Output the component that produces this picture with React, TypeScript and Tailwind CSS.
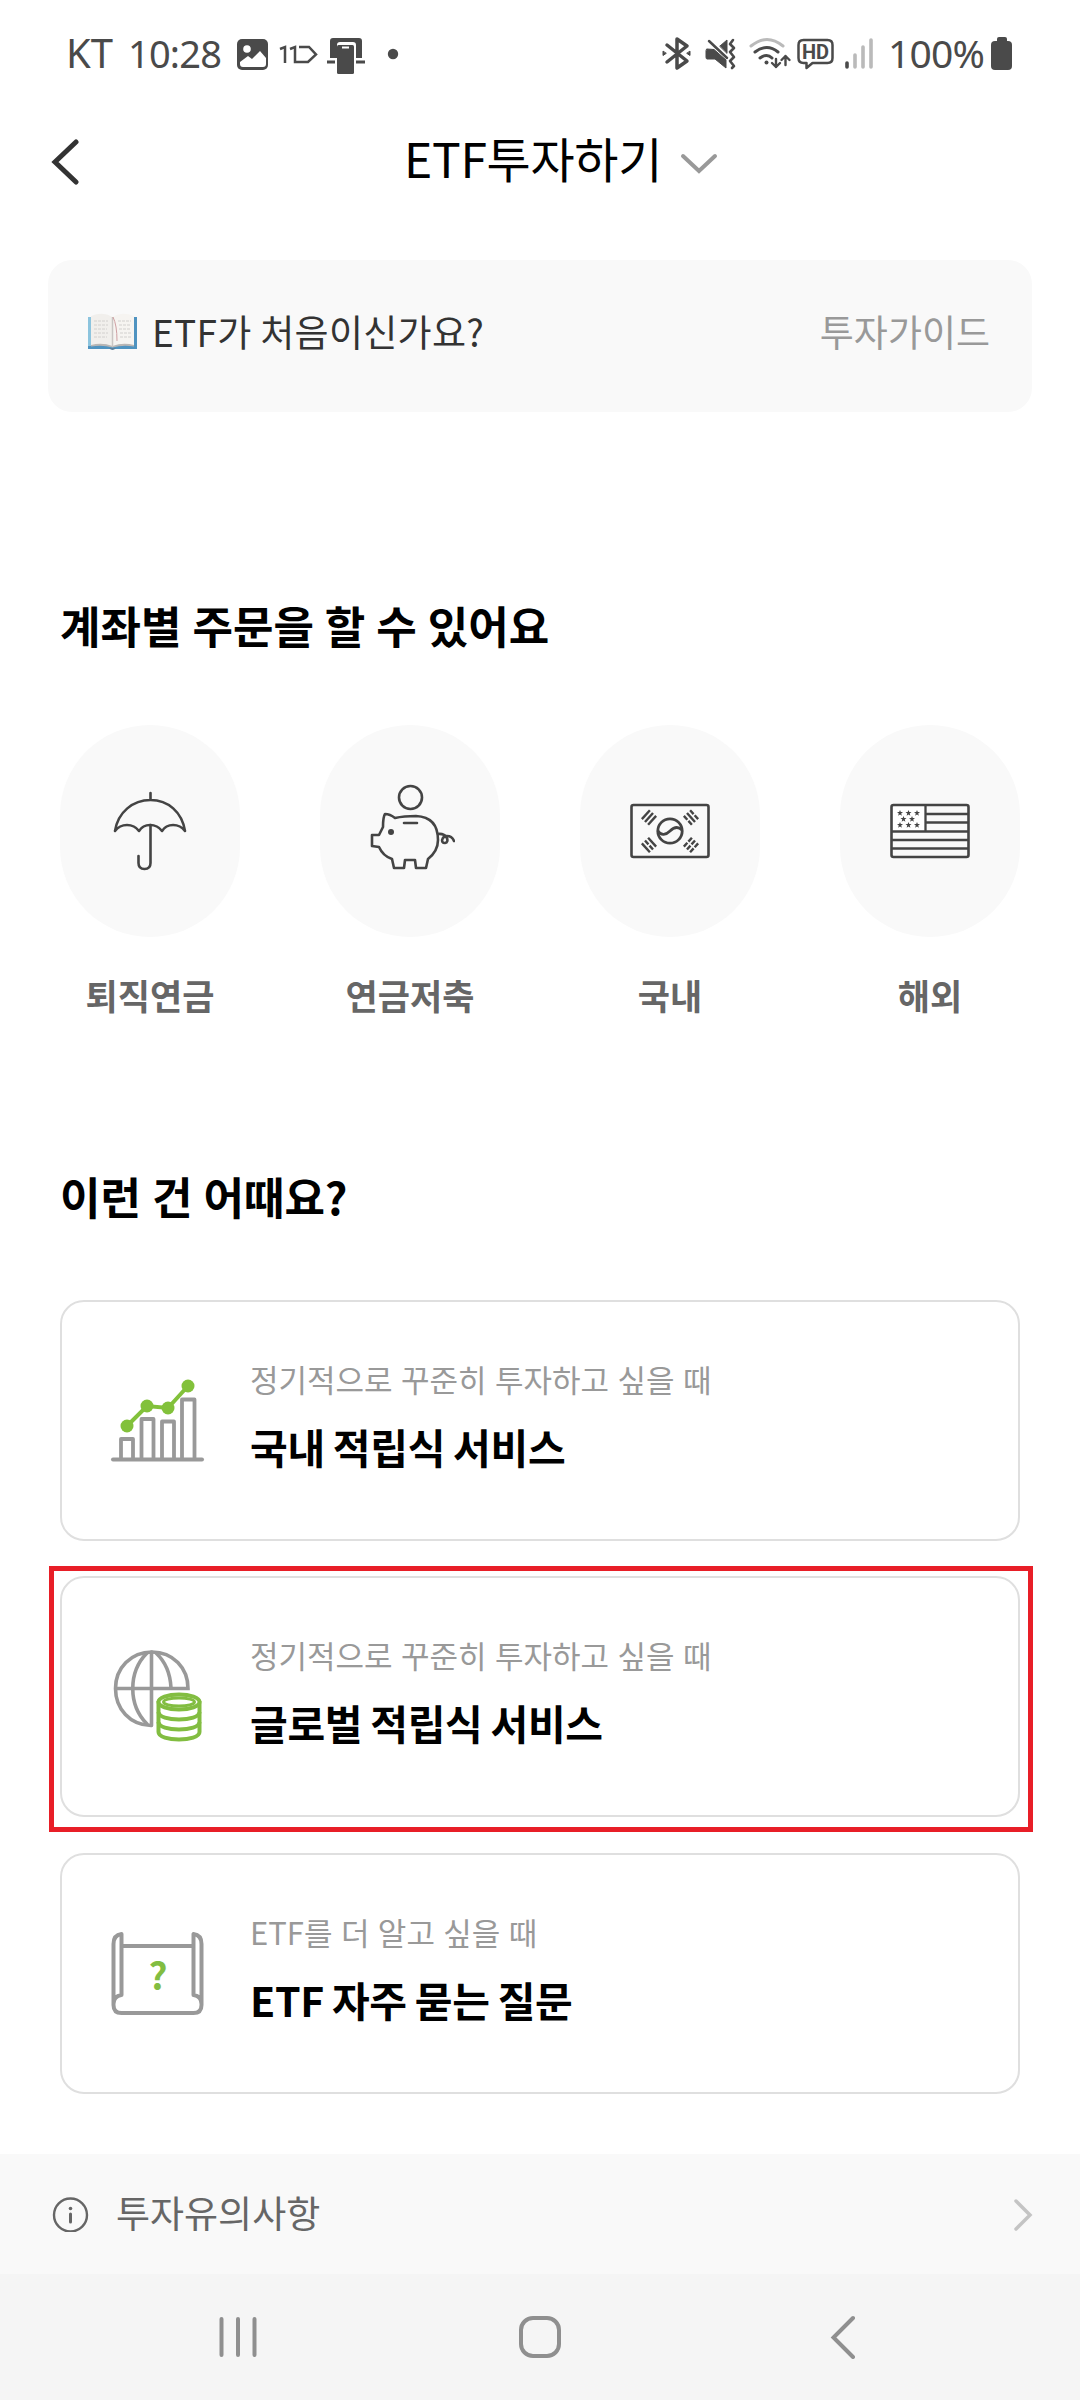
import type { ReactNode } from 'react'

const quickMenus = [
  { label: '퇴직연금', icon: <UmbrellaIcon /> },
  { label: '연금저축', icon: <PiggyIcon /> },
  { label: '국내', icon: <KoreaFlagIcon /> },
  { label: '해외', icon: <UsaFlagIcon /> },
]

export default function App() {
  return (
    <div className="flex h-[2400px] w-[1080px] flex-col bg-white font-['Noto_Sans_CJK_KR',sans-serif] whitespace-nowrap text-black">
      <StatusBar />

      <header className="flex h-[104px] items-center pl-[51px]">
        <svg className="mt-1 h-[46px] w-7" viewBox="0 0 28 46" fill="none">
          <path
            d="M25 3 4 23l21 20"
            stroke="#333"
            strokeWidth="5"
            strokeLinecap="round"
          />
        </svg>
        <div className="ml-[325px] flex items-center">
          <h1 className="w-[257px] pb-1.5 text-[48px] leading-[56px] tracking-[-0.3px]">
            ETF투자하기
          </h1>
          <svg className="mt-2 ml-[19px] h-6 w-10" viewBox="0 0 40 24" fill="none">
            <path
              d="m3 4 16 15L35 4"
              stroke="#999"
              strokeWidth="4"
              strokeLinecap="round"
            />
          </svg>
        </div>
      </header>

      <section className="mx-12 mt-12 flex h-[152px] items-center rounded-3xl bg-[#f9f9f9] pr-[42px] pb-2 pl-[39px]">
        <BookIcon />
        <span className="ml-3.5 text-[37px] tracking-[0.3px] text-[#333]">
          ETF가 처음이신가요?
        </span>
        <span className="ml-auto text-[37px] text-[#999]">투자가이드</span>
      </section>

      <section className="mt-[181px] px-[60px]">
        <h2 className="h-[64px] text-[44px] leading-[64px] font-bold [word-spacing:1px]">
          계좌별 주문을 할 수 있어요
        </h2>
        <div className="mt-[68px] flex justify-between">
          {quickMenus.map((menu) => (
            <div key={menu.label} className="flex w-[180px] flex-col items-center">
              <div className="flex h-[212px] w-[180px] items-center justify-center rounded-[90px] bg-[#f9f9f9]">
                {menu.icon}
              </div>
              <span className="mt-8 text-[35px] leading-[52px] font-bold text-[#666]">
                {menu.label}
              </span>
            </div>
          ))}
        </div>
      </section>

      <section className="mt-[143px] px-[60px]">
        <h2 className="h-[64px] text-[44px] leading-[64px] font-bold [word-spacing:1px]">
          이런 건 어때요?
        </h2>
        <div className="mt-[72px] flex flex-col gap-[35px]">
          <ServiceCard
            icon={<ChartIcon />}
            caption="정기적으로 꾸준히 투자하고 싶을 때"
            title="국내 적립식 서비스"
          />
          <div className="relative mb-px">
            <ServiceCard
              icon={<GlobeIcon />}
              caption="정기적으로 꾸준히 투자하고 싶을 때"
              title="글로벌 적립식 서비스"
            />
            <div className="absolute -top-[10px] -right-[13px] -bottom-[15px] -left-[11px] border-[5px] border-[#e81e27]" />
          </div>
          <ServiceCard
            icon={<ScrollIcon />}
            caption="ETF를 더 알고 싶을 때"
            title="ETF 자주 묻는 질문"
          />
        </div>
      </section>

      <div className="mt-auto flex h-[120px] shrink-0 items-center bg-[#f9f9f9] pl-[52px]">
        <svg className="h-9 w-[37px]" viewBox="0 0 37 36" fill="none" stroke="#666">
          <circle cx="18.5" cy="19" r="16.5" strokeWidth="2.4" />
          <path d="M18.5 18v8" strokeWidth="3" strokeLinecap="round" />
          <circle cx="18.5" cy="12.5" r="1.8" fill="#666" stroke="none" />
        </svg>
        <span className="ml-[27px] pb-1 text-[37px] leading-[56px] text-[#666]">
          투자유의사항
        </span>
        <svg className="mr-[47px] ml-auto h-9 w-5" viewBox="0 0 20 36" fill="none">
          <path
            d="m3 5 14 14L3 33"
            stroke="#c4c4c4"
            strokeWidth="3.5"
            strokeLinecap="round"
          />
        </svg>
      </div>

      <nav className="flex h-[126px] shrink-0 items-center bg-[#f5f5f5] pl-[218px]">
        <svg className="h-11 w-10" viewBox="0 0 40 44" stroke="#8f8f8f">
          <path d="M3.5 4v36M20 4v36M36.500 4v36" strokeWidth="4" strokeLinecap="round" />
        </svg>
        <div className="ml-[261px] h-[42px] w-[42px] rounded-[14px] border-4 border-[#8f8f8f]" />
        <svg className="ml-[269px] h-11 w-7" viewBox="0 0 28 44" fill="none">
          <path
            d="M23 3 3.500 22.500 23 42"
            stroke="#8f8f8f"
            strokeWidth="4"
            strokeLinecap="round"
          />
        </svg>
      </nav>
    </div>
  )
}

interface ServiceCardProps {
  icon: ReactNode
  caption: string
  title: string
}

function ServiceCard({ icon, caption, title }: ServiceCardProps) {
  return (
    <div className="flex h-[241px] items-center rounded-[24px] border-2 border-[#dfdfdf] bg-white pl-12">
      <div className="pb-[3px]">{icon}</div>
      <div className="ml-11 flex flex-col pb-[9px]">
        <span className="text-[31px] leading-[46px] text-[#999] [word-spacing:1.5px]">
          {caption}
        </span>
        <span className="mt-[14px] text-[41px] leading-[60px] font-bold tracking-[-0.3px] [word-spacing:-1px]">
          {title}
        </span>
      </div>
    </div>
  )
}

function StatusBar() {
  return (
    <div className="flex h-[108px] shrink-0 items-center pl-[66px] font-['Noto_Sans',sans-serif] text-[#4a4a4a]">
      <span className="w-[62px] pb-0.5 text-[40px] leading-[54px]">KT</span>
      <span className="w-[99px] pb-0.5 text-[38px] leading-[54px] tracking-[-0.8px]">
        10:28
      </span>
      {/* 알림 아이콘 */}
      <svg className="ml-[9px] h-10 w-[164px]" viewBox="0 0 164 40">
        <rect x="1" y="5" width="31" height="31" rx="5" fill="#4a4a4a" />
        <circle cx="11" cy="15" r="3.800" fill="#fff" />
        <path
          d="M4 28l8-6 4 3 8-8 6 7v6q0 3-3 3H7q-3 0-3-3z"
          fill="#fff"
        />
        <g fill="none" stroke="#4a4a4a" strokeWidth="2.500">
          <path d="m44 15 5-2v16M54 15l5-2v15h13l8-7.500-7-7.500H63" />
        </g>
        <path
          d="M94 24V7q0-3 3-3h26q3 0 3 3v17h-6V11q0-3-3-3h-13q-3 0-3 3v13z"
          fill="#4a4a4a"
        />
        <path d="M91 28h8M120 28h9" stroke="#4a4a4a" strokeWidth="3" />
        <rect x="101" y="11" width="17" height="29" rx="1.500" fill="#4a4a4a" />
        <path d="M106 13.500h7" stroke="#fff" strokeWidth="2" />
        <circle cx="157" cy="20" r="5.200" fill="#4a4a4a" />
      </svg>
      {/* 블루투스 / 무음 / 와이파이 / HD / 신호 */}
      <svg
        className="ml-[260px] h-10 w-[216px]"
        viewBox="0 0 216 40"
        fill="none"
        stroke="#4a4a4a"
        strokeLinecap="round"
        strokeLinejoin="round"
      >
        <path d="m7 11 20 16-10 7V5l10 7L7 28" strokeWidth="3.500" />
        <path d="M3 17.500v4l3-2zM30 17.500v4l-3-2z" fill="#4a4a4a" strokeWidth="1" />
        <path
          d="m47 15 7 .5L66 26v8L55 25h-8q-1 0-1-2v-6zM60 12l7-6v13z"
          fill="#4a4a4a"
          strokeWidth="1"
        />
        <path d="m49 7 18 17" strokeWidth="2.500" />
        <path d="m73 6-3 4 4 4-4 4 4 5-4 4 4 5-2 2" strokeWidth="2.600" />
        <path d="M91 12q16-13 32 0" stroke="#bababa" strokeWidth="3" />
        <path d="M95 18q12-9 23 0M100 24q7-5 12 0" strokeWidth="3" />
        <circle cx="106.500" cy="28.500" r="2" fill="#4a4a4a" stroke="none" />
        <path d="M116 25v8m-4-4 4 4 4-4M125.500 31v-9m-4 4 4-4 4 4" strokeWidth="2.400" />
        <path
          d="M143.500 6h24q5 0 5 5v13q0 5-5 5h-15l-6 5v-5h-3q-5 0-5-5V11q0-5 5-5z"
          strokeWidth="2.500"
        />
        <text
          x="155.500"
          y="25"
          textAnchor="middle"
          fill="#4a4a4a"
          stroke="none"
          fontSize="20"
          fontWeight="700"
          fontFamily="Roboto"
        >
          HD
        </text>
        <path d="M187 29v4" strokeWidth="3.600" />
        <path d="M195 21v12M203 13v20M211 6v27" stroke="#bababa" strokeWidth="3.600" />
      </svg>
      <span className="ml-3 w-[103px] pb-0.5 text-[39px] leading-[54px] tracking-[-0.8px]">
        100%
      </span>
      <svg className="h-[34px] w-[22px]" viewBox="0 0 22 34" fill="#4a4a4a">
        <rect x="6" y="0" width="10" height="6" rx="2" />
        <rect x="0" y="4" width="21" height="29" rx="4" />
      </svg>
    </div>
  )
}

function BookIcon() {
  return (
    <svg className="h-[38px] w-[51px]" viewBox="0 0 51 38">
      <path d="M1 4h49v32H1z" fill="#4f93c0" />
      <path d="M1 4h3v29H1z" fill="#8cc4de" />
      <path d="M4 3q12-5 21.500 1v30Q15 29 4 33z" fill="#f1efec" />
      <path d="M47 3q-12-5-21.500 1v30Q36 29 47 33z" fill="#f6f4f1" />
      <path d="M4 32q11-3 21.500 1Q36 29 47 32v1.500q-11-2-21.500 1-10-3-21.500-1z" fill="#b9b6b4" />
      <path d="M22 35q3.500 4 7 0z" fill="#5a7f9c" />
      <path d="M25.500 4v30" stroke="#c9c5c3" strokeWidth="1.500" />
      <path d="M26 4q4 8 4 24" stroke="#cf9fa2" fill="none" />
      <path
        d="M7 8h14M7 12h14M7 16h13M7 20h14M7 24h13M31 8h13M32 12h12M32 16h12M33 20h11M33 24h11"
        stroke="#d2d0ce"
        strokeWidth="1"
        strokeDasharray="3 1"
      />
    </svg>
  )
}

function UmbrellaIcon() {
  return (
    <svg
      className="h-[106px] w-[90px]"
      viewBox="0 0 90 106"
      fill="none"
      stroke="#444"
      strokeWidth="2.600"
      strokeLinecap="round"
      strokeLinejoin="round"
    >
      <path d="M45.500 15v7M10 53C13 34 28 22 45.500 22S77 34 80 53c-6-8-18-8-23 0-6-8-18-8-23 0-6-8-18-8-24 0z" />
      <path d="M45.500 47v38q0 6-6 6t-6-6v-7" />
    </svg>
  )
}

function PiggyIcon() {
  return (
    <svg
      className="h-[106px] w-[90px]"
      viewBox="0 0 90 106"
      fill="none"
      stroke="#444"
      strokeWidth="2.600"
      strokeLinecap="round"
      strokeLinejoin="round"
    >
      <circle cx="45.500" cy="19.500" r="11.500" />
      <path d="M20 36q5 0 10 4 9-2 21-2 22 1 22 24 0 11-10 19l-2 9H51l-1-8H40l-1 8H29l-2-9q-9-3-13-12l-7-1V57h7l4-8q0-10 2-13z" />
      <path d="M39 45h13M73 56c9-1 12 8 7 9-5 0-3-7 2-7q5 0 7 5" />
      <circle cx="26" cy="54" r="3" fill="#444" stroke="none" />
    </svg>
  )
}

function Trigram({ x, y, angle, rows }: { x: number; y: number; angle: number; rows: number[] }) {
  // 1: 이어진 막대, 0: 끊어진 막대
  return (
    <g transform={`translate(${x} ${y}) rotate(${angle})`} strokeWidth="2.400">
      {rows.map((solid, i) => (
        <path
          key={i}
          d="M-6 0H6"
          transform={`translate(0 ${(i - 1) * 4.2})`}
          strokeDasharray={solid ? undefined : '5.200 1.600'}
        />
      ))}
    </g>
  )
}

function KoreaFlagIcon() {
  return (
    <svg className="h-[106px] w-[90px]" viewBox="0 0 90 106" fill="none" stroke="#444">
      <rect x="6.500" y="27" width="77" height="52" rx="2" strokeWidth="2.600" />
      <circle cx="45" cy="53" r="12.200" strokeWidth="2.800" />
      <path d="M33 53c3 5 8 4 12 0s8-5 12-1" strokeWidth="2.800" />
      <Trigram x={24} y={39.500} angle={-48} rows={[1, 1, 1]} />
      <Trigram x={66} y={39.500} angle={48} rows={[0, 1, 0]} />
      <Trigram x={24} y={67} angle={48} rows={[1, 0, 1]} />
      <Trigram x={66} y={67} angle={-48} rows={[0, 0, 0]} />
    </svg>
  )
}

const stars = [
  [15, 35], [23.500, 35], [32, 35],
  [18.500, 41], [27, 41],
  [15, 47], [23.500, 47], [32, 47],
]

function UsaFlagIcon() {
  return (
    <svg className="h-[106px] w-[90px]" viewBox="0 0 90 106" fill="none" stroke="#444">
      <path d="M8 28h33v26H8z" fill="#fff" stroke="none" />
      <rect x="6.500" y="27" width="77" height="52" rx="2" strokeWidth="2.600" />
      <path d="M41 36h42M41 44.500h42M7 53.500h76M7 62h76M7 70.500h76M40.500 27v26" strokeWidth="2.300" />
      {stars.map(([x, y]) => (
        <path
          key={`${x}-${y}`}
          d="M0-3 .8-.9 3-.9 1.200.5 1.900 2.700 0 1.400-1.900 2.700-1.200.5-3-.9-.8-.9z"
          transform={`translate(${x} ${y})`}
          fill="#444"
          stroke="none"
        />
      ))}
    </svg>
  )
}

function ChartIcon() {
  return (
    <svg className="h-[100px] w-24" viewBox="0 0 96 100" fill="none">
      <path
        d="M11 90V70h12v20M31.500 90V50h12v40M52 90V52.500h12V90M72 90V30.500h12.500V90"
        stroke="#999"
        strokeWidth="3.800"
        strokeLinejoin="round"
      />
      <path d="M3 90.500h89" stroke="#999" strokeWidth="4" strokeLinecap="round" />
      <path d="m17 57 20-20 21 2 20-22" stroke="#82c13b" strokeWidth="4" />
      <g fill="#82c13b">
        <circle cx="17" cy="57" r="6.500" />
        <circle cx="37" cy="37" r="6.500" />
        <circle cx="58" cy="39" r="6.500" />
        <circle cx="78" cy="17" r="6.500" />
      </g>
    </svg>
  )
}

function GlobeIcon() {
  return (
    <svg className="h-[100px] w-24" viewBox="0 0 96 100" fill="none">
      <g stroke="#999" strokeWidth="3.600" strokeLinecap="round">
        <path d="M41 80.500C20 80 5.500 64 5.500 43.500S21 7 42 7 78 23 78 43.500H5.500" />
        <path d="M41.500 7v73.500M37 8c-19 19-19 52 0 71M46 8q14 13 15 35" />
      </g>
      <g stroke="#82bd41" strokeWidth="4">
        <path
          d="M48.500 56v31c0 10 41 10 41 0V56"
          fill="#fff"
        />
        <ellipse cx="69" cy="57" rx="20.500" ry="7.500" fill="#fff" />
        <ellipse cx="69" cy="57" rx="15.500" ry="4" strokeWidth="3" />
        <path d="M48.500 67c0 10 41 10 41 0M48.500 77c0 10 41 10 41 0" />
      </g>
    </svg>
  )
}

function ScrollIcon() {
  return (
    <svg className="h-[100px] w-24" viewBox="0 0 96 100" fill="none">
      <g stroke="#999" strokeWidth="4" strokeLinejoin="round" strokeLinecap="round">
        <path d="M11.500 73V12q-8 1-8 10v61q0 8 8 8h72q8 0 8-8V22q0-9-8-10v61q8 1 8 9M3.500 82q0-8 8-9" />
        <path d="M12 24h71" />
      </g>
      <text
        x="48"
        y="68"
        textAnchor="middle"
        fontSize="37"
        fontWeight="700"
        fontFamily="Noto Sans CJK KR"
        fill="#82bd41"
      >
        ?
      </text>
    </svg>
  )
}
